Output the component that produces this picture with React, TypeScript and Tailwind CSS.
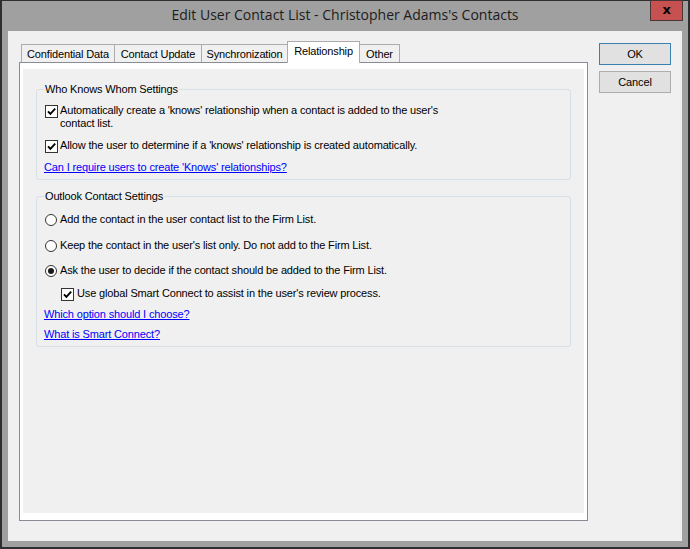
import React from "react";

const tabs = [
  { label: "Confidential Data", w: "w-[94px]" },
  { label: "Contact Update", w: "w-[88px]" },
  { label: "Synchronization", w: "w-[87px]" },
  { label: "Relationship", w: "w-[73px]", active: true },
  { label: "Other", w: "w-[41px]" },
];

function CheckBox({ checked }: { checked?: boolean }) {
  return (
    <span className="mt-[1px] flex h-[13px] w-[13px] shrink-0 items-center justify-center border border-[#333333] bg-white">
      {checked && (
        <svg viewBox="0 0 11 11" className="h-[11px] w-[11px]">
          <path d="M2 5.3 L4.4 7.9 L9.2 2.6" stroke="#000" strokeWidth="1.9" fill="none" />
        </svg>
      )}
    </span>
  );
}

function Radio({ checked }: { checked?: boolean }) {
  return (
    <span className="flex h-[12px] w-[12px] shrink-0 items-center justify-center rounded-full border border-[#333333] bg-white">
      {checked && <span className="h-[6px] w-[6px] rounded-full bg-[#1a1a1a]" />}
    </span>
  );
}

function Link({ children }: { children: React.ReactNode }) {
  return <span className="w-fit text-[#0000ff] underline underline-offset-[1px]">{children}</span>;
}

function Group({ title, className, children }: { title: string; className?: string; children: React.ReactNode }) {
  return (
    <div className={`mx-[13px] flex flex-col rounded-[3px] border border-[#d5dfe5] ${className ?? ""}`}>
      <div className="-mt-[7px] ml-[7px] w-fit bg-[#f0f0f0] px-[1px]">{title}</div>
      {children}
    </div>
  );
}

export default function App() {
  return (
    <div className="flex h-[549px] w-[690px] flex-col border-x-2 border-b-2 border-t border-[#2f2f2f] bg-[#a0a0a0] text-[11px] leading-[13px] tracking-[-0.15px] text-black font-['Liberation_Sans',Arial,sans-serif]">
      {/* title bar */}
      <div className="grid h-[30px] grid-cols-[1fr_auto_1fr]">
        <div />
        <div className="pt-[4px] text-[14px] leading-[20px] tracking-normal text-[#1c1c1c] font-['Open_Sans','Noto_Sans',sans-serif]">
          Edit User Contact List - Christopher Adams's Contacts
        </div>
        <div className="flex justify-end pr-[5px]">
          <div className="-mt-px flex h-[21px] w-[33px] items-center justify-center border border-[#4a3434] bg-[#c75050] pb-[2px] text-[13px] font-bold leading-[13px] text-black font-['DejaVu_Sans',sans-serif]">
            x
          </div>
        </div>
      </div>

      {/* client area */}
      <div className="mx-[6px] mb-[6px] flex flex-1 items-start gap-[11px] bg-[#f0f0f0] px-[11px] pt-[11px]">
        {/* tab control */}
        <div className="flex w-[569px] flex-col">
          <div className="relative z-10 flex h-[20px] items-end pl-[2px]">
            {tabs.map((t, i) =>
              t.active ? (
                <div
                  key={t.label}
                  className={`-ml-px mb-[-1px] flex h-[22px] ${t.w} items-start justify-center border border-b-0 border-[#acacac] bg-white pt-[3px]`}
                >
                  {t.label}
                </div>
              ) : (
                <div
                  key={t.label}
                  className={`${i === 0 ? "" : "-ml-px"} flex h-[18px] ${t.w} items-center justify-center border border-b-0 border-[#acacac] bg-[#f0f0f0] pt-[1px]`}
                >
                  {t.label}
                </div>
              )
            )}
          </div>
          <div className="flex h-[459px] flex-col border border-[#898c95] bg-white px-[3px] pb-[7px] pt-[6px]">
            <div className="flex flex-1 flex-col bg-[#f0f0f0]">
              <Group title="Who Knows Whom Settings" className="mt-[20px] pb-[5px]">
                <div className="mt-[8px] flex items-start gap-[2px] pl-[8px]">
                  <CheckBox checked />
                  <span>
                    Automatically create a 'knows' relationship when a contact is added to the user's
                    <br />
                    contact list.
                  </span>
                </div>
                <div className="mt-[9px] flex items-start gap-[2px] pl-[8px]">
                  <CheckBox checked />
                  <span>Allow the user to determine if a 'knows' relationship is created automatically.</span>
                </div>
                <div className="mt-[8px] pl-[7px]">
                  <Link>Can I require users to create 'Knows' relationships?</Link>
                </div>
              </Group>

              <Group title="Outlook Contact Settings" className="mt-[16px] pb-[5px]">
                <div className="mt-[10px] flex items-center gap-[3px] pl-[8px]">
                  <Radio />
                  <span>Add the contact in the user contact list to the Firm List.</span>
                </div>
                <div className="mt-[13px] flex items-center gap-[3px] pl-[8px]">
                  <Radio />
                  <span>Keep the contact in the user's list only. Do not add to the Firm List.</span>
                </div>
                <div className="mt-[12px] flex items-center gap-[3px] pl-[8px]">
                  <Radio checked />
                  <span>Ask the user to decide if the contact should be added to the Firm List.</span>
                </div>
                <div className="mt-[10px] flex items-start gap-[3px] pl-[24px]">
                  <CheckBox checked />
                  <span>Use global Smart Connect to assist in the user's review process.</span>
                </div>
                <div className="mt-[7px] pl-[7px]">
                  <Link>Which option should I choose?</Link>
                </div>
                <div className="mt-[7px] pl-[7px]">
                  <Link>What is Smart Connect?</Link>
                </div>
              </Group>
            </div>
          </div>
        </div>

        {/* dialog buttons */}
        <div className="mt-[1px] flex w-[72px] flex-col gap-[6px]">
          <div className="flex h-[22px] items-center justify-center border border-[#3c7fb1] bg-[#e1e1e1]">OK</div>
          <div className="flex h-[22px] items-center justify-center border border-[#adadad] bg-[#e1e1e1]">Cancel</div>
        </div>
      </div>
    </div>
  );
}
